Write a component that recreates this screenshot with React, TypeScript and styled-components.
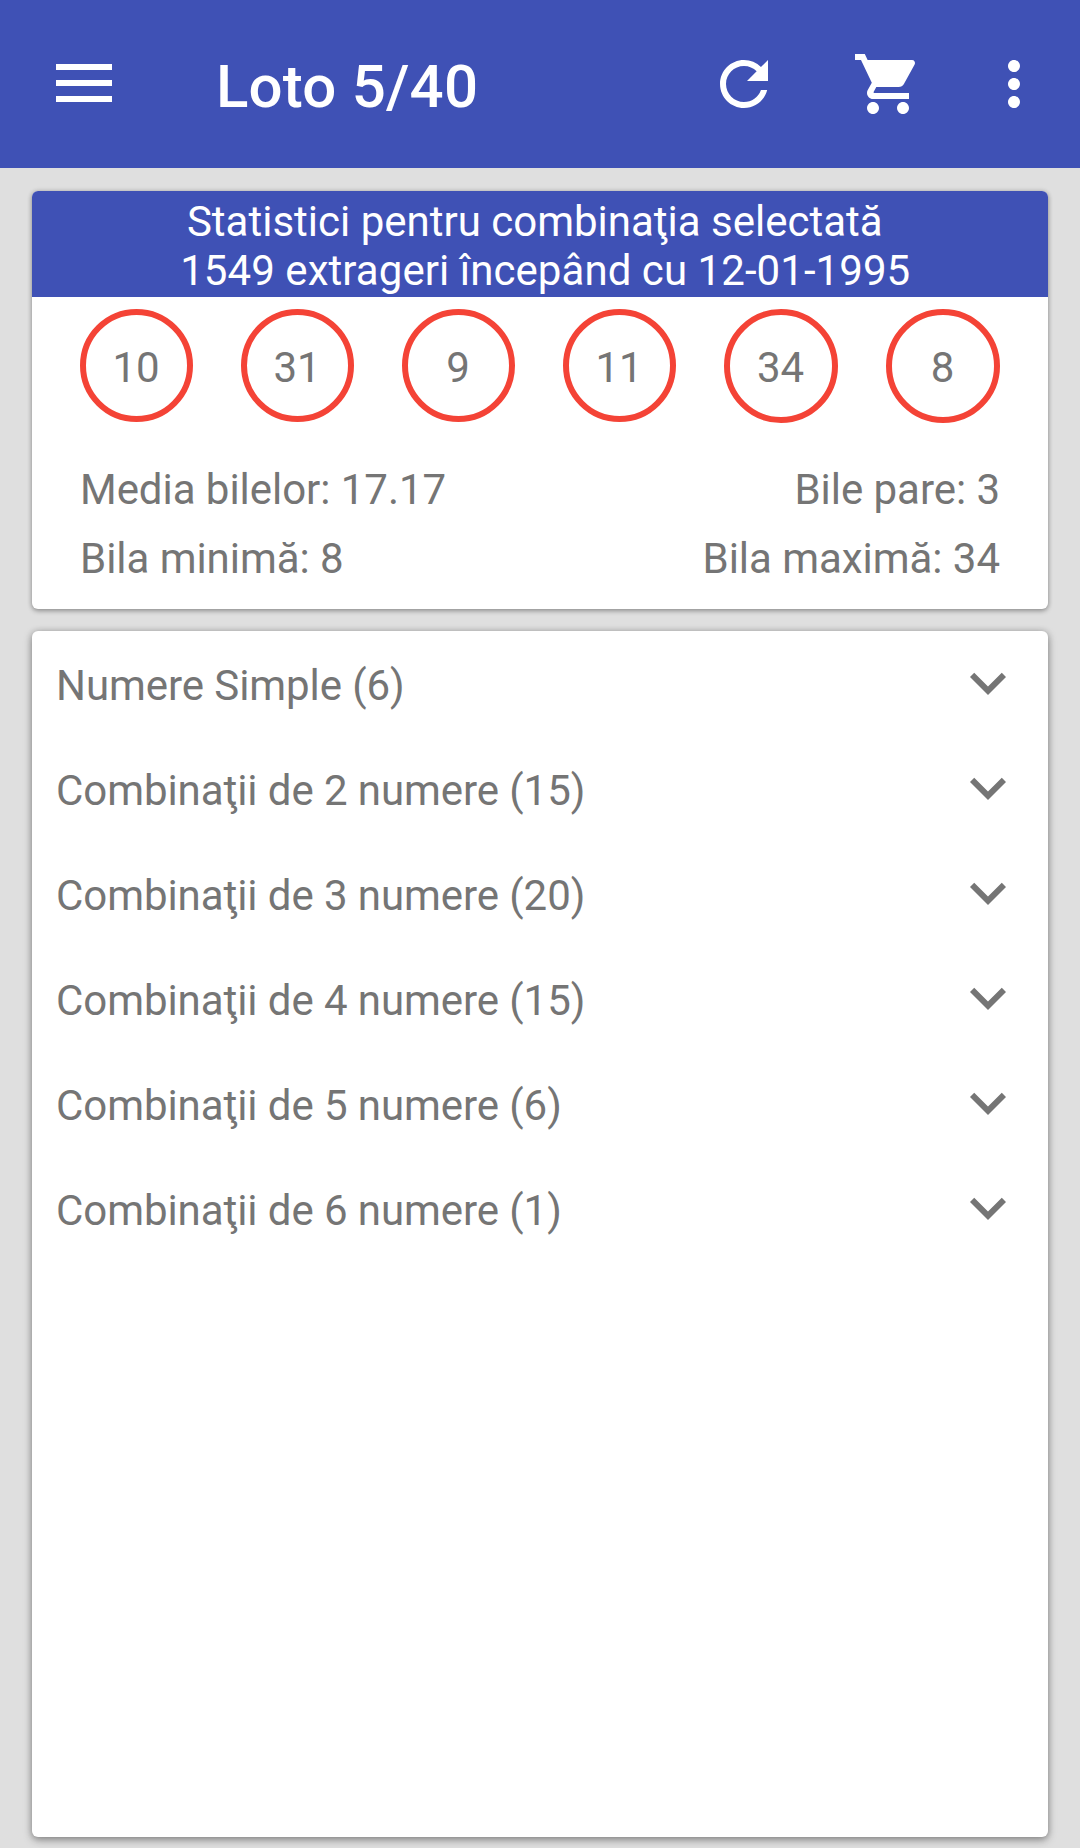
import React from "react";
import styled, { createGlobalStyle } from "styled-components";

const GlobalStyle = createGlobalStyle`
  *, *::before, *::after { box-sizing: border-box; }
  html, body { margin: 0; padding: 0; background: #dfdfdf; }
  body { font-family: Roboto, "Noto Sans", sans-serif; font-size: 42px; line-height: 49px; color: #757575; }
`;

const Screen = styled.div`
  display: flex;
  flex-direction: column;
  width: 1080px;
  height: 1848px;
  overflow: hidden;
  background: #dfdfdf;
`;

const AppBar = styled.header`
  display: flex;
  align-items: center;
  flex: none;
  height: 168px;
  padding: 0 30px 0 56px;
  background: #3f51b5;
  color: #fff;
`;

const MenuButton = styled.button`
  display: flex;
  flex-direction: column;
  gap: 10px;
  width: 56px;
  margin: 0 104px 2px 0;
  padding: 0;
  border: 0;
  background: none;
`;

const MenuBar = styled.span`
  height: 6px;
  background: #fff;
`;

const Title = styled.h1`
  flex: 1;
  margin: 6px 0 0;
  font-size: 60px;
  font-weight: 500;
  letter-spacing: 0.2px;
  line-height: 70px;
`;

const ActionButton = styled.button<{ $gap: number }>`
  display: flex;
  margin: 0 0 0 ${(p) => p.$gap}px;
  padding: 0;
  border: 0;
  background: none;
  color: inherit;
`;

const Glyph = styled.svg`
  display: block;
  flex: none;
  width: 72px;
  height: 72px;
  fill: currentColor;
`;

const Content = styled.main`
  display: flex;
  flex: 1;
  flex-direction: column;
  gap: 22px;
  padding: 23px 32px 11px;
`;

const Card = styled.section<{ $height?: number; $raised?: boolean }>`
  ${(p) => (p.$height ? `flex: none; height: ${p.$height}px;` : "flex: 1;")}
  border-radius: 6px;
  background: #fff;
  box-shadow: ${(p) =>
    p.$raised
      ? "0 3px 8px rgba(0, 0, 0, 0.36), 0 0 6px rgba(0, 0, 0, 0.16)"
      : "0 2px 5px rgba(0, 0, 0, 0.3), 0 0 5px rgba(0, 0, 0, 0.16)"};
`;

const CardHeader = styled.h2`
  height: 106px;
  margin: 0;
  padding-top: 6px;
  border-radius: 6px 6px 0 0;
  background: #3f51b5;
  color: #fff;
  font-size: 42px;
  font-weight: 400;
  line-height: 49px;
  text-align: center;
`;

const HeaderLine = styled.span<{ $tracking?: number }>`
  display: block;
  letter-spacing: ${(p) => p.$tracking ?? 0}px;
  white-space: pre;
`;

const Balls = styled.div`
  display: grid;
  grid-template-columns: repeat(4, 113px) repeat(2, 114px);
  column-gap: 48px;
  padding: 12px 48px 0;
`;

const Ball = styled.div`
  display: flex;
  align-items: flex-start;
  justify-content: center;
  align-self: start;
  aspect-ratio: 1;
  padding: 28px 1px 0 0;
  border: 6px solid #f44336;
  border-radius: 50%;
`;

const Stats = styled.div`
  display: grid;
  gap: 20px;
  padding: 42px 48px 0;
`;

const StatRow = styled.div`
  display: flex;
  justify-content: space-between;
  letter-spacing: -0.04px;
`;

const GroupRow = styled.div`
  display: flex;
  align-items: center;
  justify-content: space-between;
  height: 105px;
  padding: 0 24px 1px;
`;

const GroupLabel = styled.span`
  padding-top: 4px;
  letter-spacing: -0.07px;
`;

const Icon = ({ path }: { path: string }) => (
  <Glyph viewBox="0 0 24 24" aria-hidden="true">
    <path d={path} />
  </Glyph>
);

const REFRESH =
  "M17.65 6.35A7.958 7.958 0 0 0 12 4c-4.42 0-7.99 3.58-7.99 8s3.57 8 7.99 8c3.73 0 6.84-2.55 7.73-6h-2.08A5.99 5.99 0 0 1 12 18c-3.31 0-6-2.69-6-6s2.69-6 6-6c1.66 0 3.14.69 4.22 1.78L13 11h7V4l-2.35 2.35z";
const CART =
  "M7 18c-1.1 0-1.99.9-1.99 2S5.9 22 7 22s2-.9 2-2-.9-2-2-2zM1 2v2h2l3.6 7.59-1.35 2.45c-.16.28-.25.61-.25.96 0 1.1.9 2 2 2h12v-2H7.42c-.14 0-.25-.11-.25-.25l.03-.12.9-1.63h7.45c.75 0 1.41-.41 1.75-1.03l3.58-6.49A1.003 1.003 0 0 0 20 4H5.21l-.94-2H1zm16 16c-1.1 0-1.99.9-1.99 2s.89 2 1.99 2 2-.9 2-2-.9-2-2-2z";
const MORE =
  "M12 8c1.1 0 2-.9 2-2s-.9-2-2-2-2 .9-2 2 .9 2 2 2zm0 2c-1.1 0-2 .9-2 2s.9 2 2 2 2-.9 2-2-.9-2-2-2zm0 6c-1.1 0-2 .9-2 2s.9 2 2 2 2-.9 2-2-.9-2-2-2z";
const EXPAND = "M16.59 8.59L12 13.17 7.41 8.59 6 10l6 6 6-6z";

const balls = [10, 31, 9, 11, 34, 8];

const stats = [
  ["Media bilelor: 17.17", "Bile pare: 3"],
  ["Bila minimă: 8", "Bila maximă: 34"],
];

const groups = [
  "Numere Simple (6)",
  "Combinaţii de 2 numere (15)",
  "Combinaţii de 3 numere (20)",
  "Combinaţii de 4 numere (15)",
  "Combinaţii de 5 numere (6)",
  "Combinaţii de 6 numere (1)",
];

export default function App() {
  return (
    <>
      <GlobalStyle />
      <Screen>
        <AppBar>
          <MenuButton>
            <MenuBar />
            <MenuBar />
            <MenuBar />
          </MenuButton>
          <Title>Loto 5/40</Title>
          <ActionButton $gap={0}>
            <Icon path={REFRESH} />
          </ActionButton>
          <ActionButton $gap={72}>
            <Icon path={CART} />
          </ActionButton>
          <ActionButton $gap={54}>
            <Icon path={MORE} />
          </ActionButton>
        </AppBar>
        <Content>
          <Card $height={418}>
            <CardHeader>
              <HeaderLine>{"Statistici pentru combinaţia selectată "}</HeaderLine>
              <HeaderLine $tracking={0.06}>{" 1549 extrageri începând cu 12-01-1995"}</HeaderLine>
            </CardHeader>
            <Balls>
              {balls.map((n) => (
                <Ball key={n}>{n}</Ball>
              ))}
            </Balls>
            <Stats>
              {stats.map(([left, right]) => (
                <StatRow key={left}>
                  <span>{left}</span>
                  <span>{right}</span>
                </StatRow>
              ))}
            </Stats>
          </Card>
          <Card $raised>
            {groups.map((label) => (
              <GroupRow key={label}>
                <GroupLabel>{label}</GroupLabel>
                <Icon path={EXPAND} />
              </GroupRow>
            ))}
          </Card>
        </Content>
      </Screen>
    </>
  );
}
